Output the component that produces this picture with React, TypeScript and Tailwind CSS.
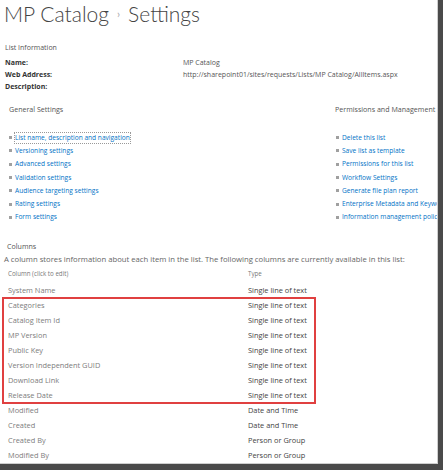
const link = "text-[#0072c6]";

const general = [
  "List name, description and navigation",
  "Versioning settings",
  "Advanced settings",
  "Validation settings",
  "Audience targeting settings",
  "Rating settings",
  "Form settings",
];

const perms = [
  "Delete this list",
  "Save list as template",
  "Permissions for this list",
  "Workflow Settings",
  "Generate file plan report",
  "Enterprise Metadata and Keywords Settings",
  "Information management policy settings",
];

const boxed = [
  "Categories",
  "Catalog Item Id",
  "MP Version",
  "Public Key",
  "Version Independent GUID",
  "Download Link",
  "Release Date",
];

const rest = [
  ["Modified", "Date and Time"],
  ["Created", "Date and Time"],
  ["Created By", "Person or Group"],
  ["Modified By", "Person or Group"],
];

function LinkItem({ text, first }: { text: string; first?: boolean }) {
  return (
    <li className="flex items-center h-[13.3px] whitespace-nowrap">
      <span className="w-[3px] h-[3px] bg-[#a0a0a0] mr-[3px] shrink-0" />
      <span className={`${link} ${first ? "outline outline-1 outline-dotted outline-[#999]" : ""}`}>
        {text}
      </span>
    </li>
  );
}

function ColRow({ name, type }: { name: string; type: string }) {
  return (
    <div className="flex h-[15px] items-center whitespace-nowrap">
      <span className="w-[240px] text-[#7d7d7d]">{name}</span>
      <span className="text-[#444]">{type}</span>
    </div>
  );
}

export default function App() {
  return (
    <div className="w-[443px] h-[470px] bg-white overflow-hidden">
      <div
        className="w-[443px] h-[470px] border-r-[5px] border-b-[6px] border-[#4a4a4a]"
        style={{ fontFamily: "'Open Sans', 'Noto Sans', sans-serif" }}
      >
        <div className="w-[438px] h-[464px] border-r border-b border-[#cfcfcf] overflow-hidden">
          {/* Title */}
          <div
            className="flex items-center pl-[4px] h-[28px] text-[#444] text-[21px] font-light"
            style={{ fontFamily: "Lato, 'Open Sans', sans-serif" }}
          >
            <span>MP Catalog</span>
            <span className="text-[#a8a8a8] text-[11px] font-normal mx-[8px]">›</span>
            <span>Settings</span>
          </div>

          {/* List information */}
          <div className="pl-[5px] mt-[14px] text-[7px] text-[#555]">
            <div className="h-[12px] flex items-center">List Information</div>
            <div className="flex h-[12px] mt-[3px] items-center">
              <span className="w-[178px] font-bold text-[#333]">Name:</span>
              <span>MP Catalog</span>
            </div>
            <div className="flex h-[12px] items-center">
              <span className="w-[178px] font-bold text-[#333]">Web Address:</span>
              <span>http://sharepoint01/sites/requests/Lists/MP Catalog/AllItems.aspx</span>
            </div>
            <div className="flex h-[12px] items-center">
              <span className="w-[178px] font-bold text-[#333]">Description:</span>
            </div>
          </div>

          {/* Settings columns */}
          <div className="flex mt-[10px]">
            <div className="pl-[9px] w-[335px] shrink-0">
              <div className="text-[#555] h-[12px] flex items-center text-[7.1px]">General Settings</div>
              <ul className="mt-[16px] text-[6.6px]">
                {general.map((t, i) => (
                  <LinkItem key={t} text={t} first={i === 0} />
                ))}
              </ul>
            </div>
            <div className="overflow-hidden">
              <div className="text-[#555] h-[12px] flex items-center whitespace-nowrap text-[7.1px]">
                Permissions and Management
              </div>
              <ul className="mt-[16px] pl-[1px] text-[6.6px]">
                {perms.map((t) => (
                  <LinkItem key={t} text={t} />
                ))}
              </ul>
            </div>
          </div>

          {/* Columns */}
          <div className="mt-[15px]">
            <div className="pl-[7px] text-[#555] h-[14px] flex items-center text-[7.1px]">Columns</div>
            <div className="pl-[4px] text-[#666] h-[14px] flex items-center whitespace-nowrap text-[7.7px]">
              A column stores information about each item in the list. The following columns are currently available in this list:
            </div>
            <div className="pl-[8px] flex h-[14px] items-center text-[6.2px] text-[#777]">
              <span className="w-[240px]">Column (click to edit)</span>
              <span>Type</span>
            </div>
            <div className="pl-[8px] text-[7.4px] mt-[2px]">
              <ColRow name="System Name" type="Single line of text" />
            </div>
            <div className="pl-[8px] text-[7.4px]">
              <div className="w-[312px] -ml-[5px] pl-[5px] outline-2 outline-offset-[-1px] outline-[#e04040]">
                {boxed.map((n) => (
                  <ColRow key={n} name={n} type="Single line of text" />
                ))}
              </div>
              {rest.map(([n, t]) => (
                <ColRow key={n} name={n} type={t} />
              ))}
            </div>
          </div>
        </div>
      </div>
    </div>
  );
}
